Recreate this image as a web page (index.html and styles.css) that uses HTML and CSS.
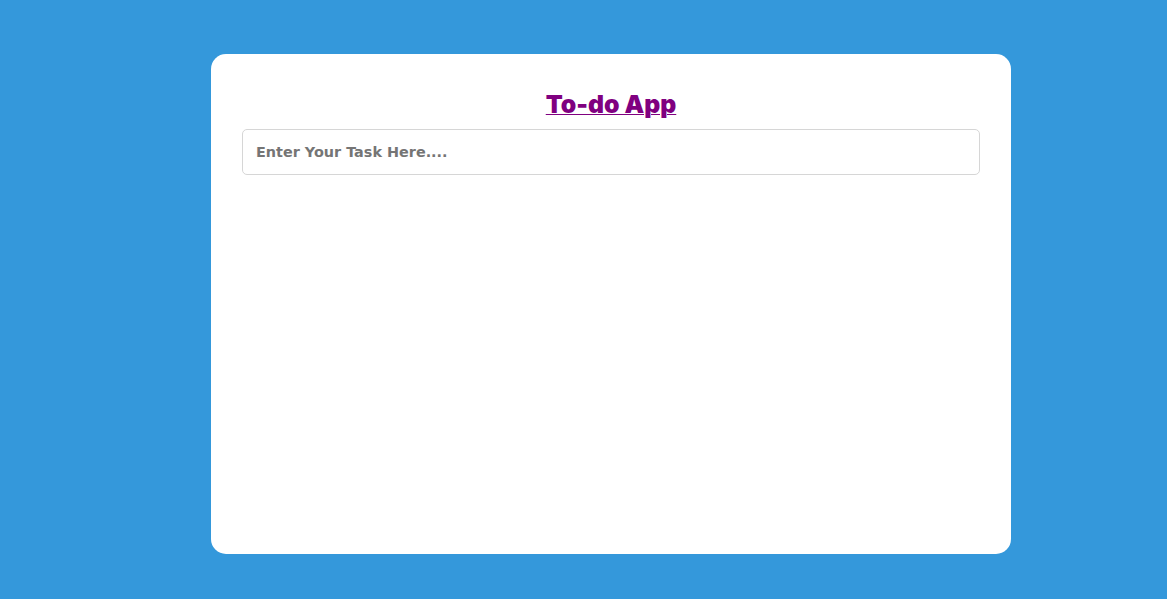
FILE: index.html
```html
<!DOCTYPE html>
<html>
<head>
<meta charset="utf-8">
<link rel="stylesheet" href="styles.css">
</head>
<body>
<div class="page">
  <div class="card">
    <h1 class="title">To-do App</h1>
    <input class="task-input" type="text" placeholder="Enter Your Task Here....">
  </div>
</div>
</body>
</html>
```
FILE: styles.css
```css
html, body {
  margin: 0;
  padding: 0;
  background: #3498db;
}
.page {
  padding: 54px 0 0 211px;
}
.card {
  box-sizing: border-box;
  width: 800px;
  height: 500px;
  background: #ffffff;
  border-radius: 15px;
  padding: 30px 31px 0 31px;
}
.title {
  margin: 0 0 5px 0;
  text-align: center;
  font-family: "Inter", sans-serif;
  font-weight: 900;
  font-size: 24.8px;
  line-height: 40px;
  color: #800080;
  text-decoration: underline;
  text-decoration-thickness: 1px;
  letter-spacing: 0;
}
.task-input {
  box-sizing: border-box;
  display: block;
  width: 738px;
  height: 46px;
  border: 1px solid #d6d6d6;
  border-radius: 5px;
  padding: 0 13px;
  font-family: "DejaVu Sans", Verdana, sans-serif;
  font-weight: bold;
  font-size: 14.4px;
  color: #555;
  outline: none;
}
.task-input::placeholder {
  color: #757575;
}
```
